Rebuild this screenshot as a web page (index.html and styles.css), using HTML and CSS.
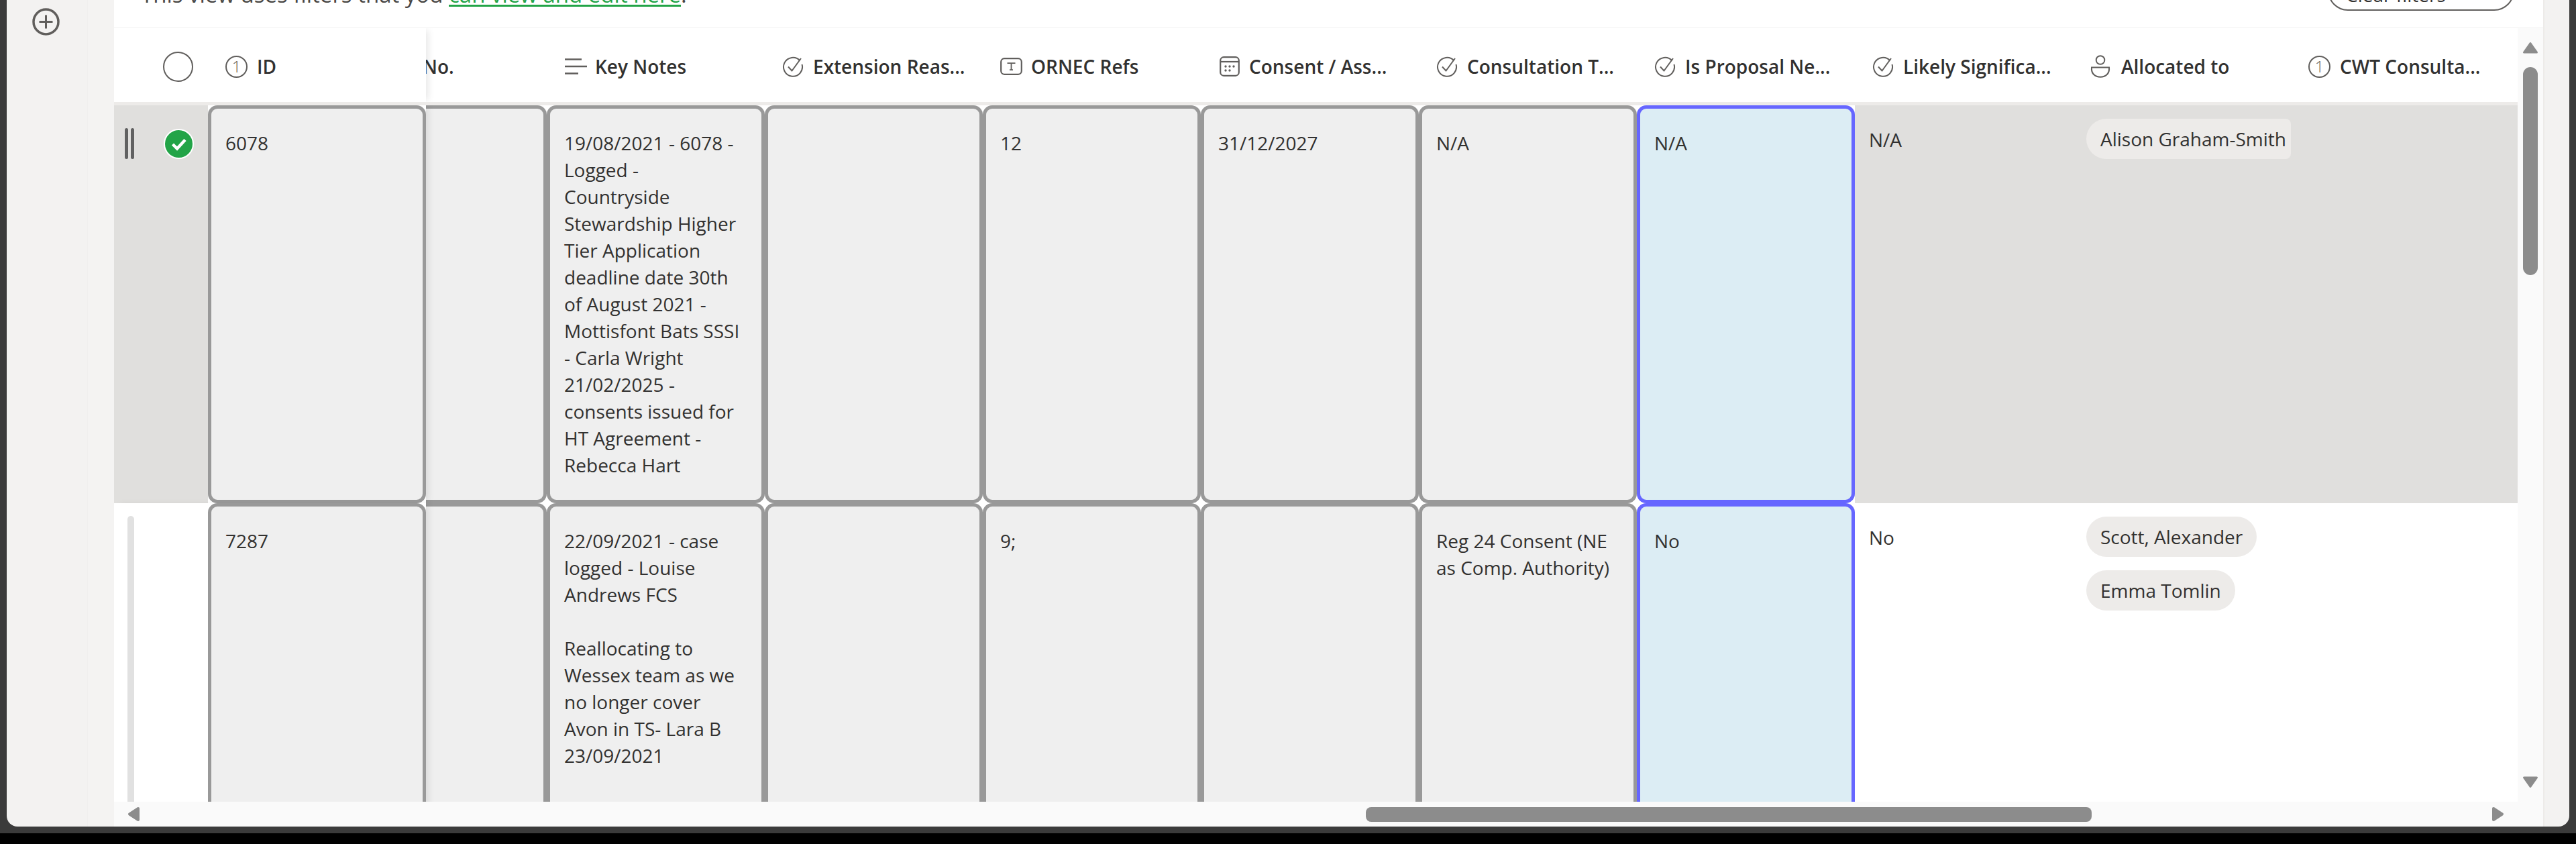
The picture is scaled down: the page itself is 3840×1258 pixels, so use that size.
FILE: index.html
```html
<!DOCTYPE html>
<html lang="en">
<head>
    <meta charset="UTF-8">
    <meta name="viewport" content="width=device-width, initial-scale=1.0">
    <title>Casework list</title>
    <link rel="stylesheet" href="styles.css">
</head>
<body>
    <div class="window">
        <div class="shell">
            <aside class="rail">
                <svg class="add-icon" viewBox="0 0 41 41">
                    <circle cx="20.5" cy="20.5" r="18.5" fill="none" stroke="#605e5c" stroke-width="3.5"/>
                    <path d="M20.5 10.5v20M10.5 20.5h20" fill="none" stroke="#605e5c" stroke-width="3"/>
                </svg>
            </aside>
            <div class="rail-gap"></div>

            <main class="main">
                <div class="filter-bar">
                    <p class="filter-note">This view uses filters that you <a href="#" class="filter-link">can view and edit here</a>.</p>
                    <button class="clear-btn">Clear filters</button>
                </div>

                <div class="grid-area">
                    <div class="grid">
                        <!-- Column headers -->
                        <div class="head-row">
                            <div class="frozen frozen-head">
                                <span class="select-all"></span>
                                <div class="head-id"><span class="num-icon">1</span><span class="head-label">ID</span></div>
                            </div>
                            <div class="head-cell head-short"><span class="head-clip">No.</span></div>
                            <div class="head-cell">
                                <span class="head-icon">
                                    <svg width="34" height="26" viewBox="0 0 34 26"><path d="M1 2.5h25M1 13h33M1 23.500h20" fill="none" stroke="#605e5c" stroke-width="2.500"/></svg>
                                </span>
                                <span class="head-label">Key Notes</span>
                            </div>
                            <div class="head-cell">
                                <span class="head-icon"><svg width="32" height="31" viewBox="0 0 32 31"><use href="#check-icon"/></svg></span>
                                <span class="head-label">Extension Reas...</span>
                            </div>
                            <div class="head-cell">
                                <span class="head-icon">
                                    <svg width="33" height="26" viewBox="0 0 33 26">
                                        <rect x="1.200" y="1.200" width="30.600" height="23.600" rx="5" fill="none" stroke="#605e5c" stroke-width="2.200"/>
                                        <path d="M10.500 8.200h12M16.500 8.200v10M14 18.200h5" fill="none" stroke="#605e5c" stroke-width="1.800"/>
                                    </svg>
                                </span>
                                <span class="head-label">ORNEC Refs</span>
                            </div>
                            <div class="head-cell head-date">
                                <span class="head-icon">
                                    <svg width="30" height="30" viewBox="0 0 30 30">
                                        <rect x="1.200" y="1.200" width="27.600" height="27.600" rx="5" fill="none" stroke="#605e5c" stroke-width="2.200"/>
                                        <path d="M1.500 8h27" stroke="#605e5c" stroke-width="2.200"/>
                                        <g fill="#605e5c"><circle cx="9" cy="15" r="1.700"/><circle cx="15" cy="15" r="1.700"/><circle cx="21" cy="15" r="1.700"/><circle cx="9" cy="21" r="1.700"/><circle cx="15" cy="21" r="1.700"/></g>
                                    </svg>
                                </span>
                                <span class="head-label">Consent / Ass...</span>
                            </div>
                            <div class="head-cell">
                                <span class="head-icon"><svg width="32" height="31" viewBox="0 0 32 31"><use href="#check-icon"/></svg></span>
                                <span class="head-label">Consultation T...</span>
                            </div>
                            <div class="head-cell">
                                <span class="head-icon"><svg width="32" height="31" viewBox="0 0 32 31"><use href="#check-icon"/></svg></span>
                                <span class="head-label">Is Proposal Ne...</span>
                            </div>
                            <div class="head-cell">
                                <span class="head-icon"><svg width="32" height="31" viewBox="0 0 32 31"><use href="#check-icon"/></svg></span>
                                <span class="head-label">Likely Significa...</span>
                            </div>
                            <div class="head-cell">
                                <span class="head-icon">
                                    <svg width="30" height="34" viewBox="0 0 30 34">
                                        <circle cx="15" cy="7.500" r="6.300" fill="none" stroke="#605e5c" stroke-width="2"/>
                                        <path d="M2 18.500h26c1 9-5 14.300-13 14.300S1 27.500 2 18.500z" fill="none" stroke="#605e5c" stroke-width="2"/>
                                    </svg>
                                </span>
                                <span class="head-label">Allocated to</span>
                            </div>
                            <div class="head-cell"><span class="num-icon">1</span><span class="head-label">CWT Consulta...</span></div>
                        </div>

                        <div class="rows">
                            <div class="row row-selected">
                                <div class="frozen">
                                    <div class="lead">
                                        <span class="handle-double"><i></i><i></i></span>
                                        <svg class="row-check" viewBox="0 0 45 45">
                                            <circle cx="22.500" cy="22.500" r="21.500" fill="#22a447" stroke="#fff" stroke-width="2"/>
                                            <path d="M13.500 23l6.500 6.500 12-13" fill="none" stroke="#fff" stroke-width="4.500"/>
                                        </svg>
                                    </div>
                                    <div class="cell cell-edit">6078</div>
                                </div>
                                <div class="cell-group">
                                    <div class="cell cell-edit cell-short"></div>
                                    <div class="cell cell-edit">19/08/2021 - 6078 -<br>Logged -<br>Countryside<br>Stewardship Higher<br>Tier Application<br>deadline date 30th<br>of August 2021 -<br>Mottisfont Bats SSSI<br>- Carla Wright<br>21/02/2025 -<br>consents issued for<br>HT Agreement -<br>Rebecca Hart</div>
                                    <div class="cell cell-edit"></div>
                                    <div class="cell cell-edit">12</div>
                                    <div class="cell cell-edit">31/12/2027</div>
                                    <div class="cell cell-edit">N/A</div>
                                    <div class="cell cell-edit cell-active">N/A</div>
                                </div>
                                <div class="cell cell-plain">N/A</div>
                                <div class="cell cell-people">
                                    <span class="pill pill-clipped">Alison Graham-Smith</span>
                                </div>
                            </div>

                            <div class="row">
                                <div class="frozen">
                                    <div class="lead">
                                        <span class="handle-single"></span>
                                    </div>
                                    <div class="cell cell-edit">7287</div>
                                </div>
                                <div class="cell-group">
                                    <div class="cell cell-edit cell-short"></div>
                                    <div class="cell cell-edit">22/09/2021 - case<br>logged - Louise<br>Andrews FCS<br><br>Reallocating to<br>Wessex team as we<br>no longer cover<br>Avon in TS- Lara B<br>23/09/2021</div>
                                    <div class="cell cell-edit"></div>
                                    <div class="cell cell-edit">9;</div>
                                    <div class="cell cell-edit"></div>
                                    <div class="cell cell-edit">Reg 24 Consent (NE<br>as Comp. Authority)</div>
                                    <div class="cell cell-edit cell-active">No</div>
                                </div>
                                <div class="cell cell-plain">No</div>
                                <div class="cell cell-people">
                                    <span class="pill">Scott, Alexander</span>
                                    <span class="pill">Emma Tomlin</span>
                                </div>
                            </div>
                        </div>

                        <div class="hscroll">
                            <svg class="arrow-x" viewBox="0 0 18 23"><path d="M16 3L3 11.500 16 20z" fill="#8c8c8c" stroke="#8c8c8c" stroke-width="4" stroke-linejoin="round"/></svg>
                            <span class="hscroll-thumb"></span>
                            <svg class="arrow-x arrow-end" viewBox="0 0 18 23"><path d="M2 3l13 8.500L2 20z" fill="#8c8c8c" stroke="#8c8c8c" stroke-width="4" stroke-linejoin="round"/></svg>
                        </div>
                    </div>

                    <div class="vscroll">
                        <svg class="arrow-y" viewBox="0 0 24 18"><path d="M12 2.500L2.500 16h19z" fill="#8c8c8c" stroke="#8c8c8c" stroke-width="3" stroke-linejoin="round"/></svg>
                        <span class="vscroll-thumb"></span>
                        <svg class="arrow-y arrow-end-y" viewBox="0 0 24 18"><path d="M2.500 2h19L12 15.500z" fill="#8c8c8c" stroke="#8c8c8c" stroke-width="3" stroke-linejoin="round"/></svg>
                    </div>
                </div>
            </main>

            <div class="side-gap"></div>
        </div>
    </div>

    <svg class="icon-defs" width="0" height="0">
        <symbol id="check-icon" viewBox="0 0 32 31">
            <path d="M26.500 6.500A14 14 0 1 0 29.500 12" fill="none" stroke="#605e5c" stroke-width="2"/>
            <path d="M9 15.500l5.500 6L28 3" fill="none" stroke="#605e5c" stroke-width="2"/>
        </symbol>
    </svg>
</body>
</html>
```

FILE: styles.css
```css
* {
  box-sizing: border-box;
}

body {
  margin: 0;
  height: 1258px;
  overflow: hidden;
  background: #000;
  font-family: "Open Sans", "Noto Sans", sans-serif;
  font-size: 28px;
  line-height: 40px;
  color: #323130;
}

.window {
  height: 1242px;
  padding: 0 10px 10px;
  background: #3b3b3b;
}

.shell {
  display: flex;
  height: 1232px;
  background: #f3f2f1;
  border-radius: 0 0 16px 16px;
  overflow: hidden;
}

.rail {
  flex: none;
  width: 120px;
  padding: 12px 0 0 38px;
}

.add-icon {
  display: block;
  width: 41px;
  height: 41px;
}

.rail-gap {
  flex: none;
  width: 40px;
  background: #f4f3f2;
  border-left: 1px solid #f0efee;
}

.main {
  flex: none;
  width: 3621px;
  display: flex;
  flex-direction: column;
  background: #fff;
  overflow: hidden;
}

.side-gap {
  flex: 1;
  border-left: 2px solid #edebe9;
}

/* Filter note, scrolled mostly out of view */
.filter-bar {
  flex: none;
  display: flex;
  height: 42px;
  padding: 0 43px 0 40px;
  border-bottom: 2px solid #f8f8f8;
}

.filter-note {
  margin: -28px 0 0;
  height: 40px;
  font-size: 33px;
  color: #484644;
}

.filter-link {
  color: #22a447;
  text-decoration: underline;
  text-decoration-thickness: 3px;
  text-underline-offset: 3px;
}

.clear-btn {
  width: 278px;
  height: 60px;
  margin: -44px 0 0 auto;
  padding: 12px 0 0 25px;
  background: #fff;
  border: 2.5px solid #605e5c;
  border-radius: 30px;
  font: inherit;
  text-align: left;
  color: #323130;
}

.grid-area {
  flex: 1;
  display: flex;
  min-height: 0;
}

.grid {
  flex: none;
  width: 3583px;
  display: flex;
  flex-direction: column;
  overflow: hidden;
}

/* Header */
.head-row {
  flex: none;
  display: flex;
  height: 115px;
  border-bottom: 5px solid #edebe9;
  overflow: hidden;
}

.frozen {
  flex: none;
  display: flex;
  width: 465px;
  background: #fff;
  position: relative;
  z-index: 2;
  box-shadow: 6px 0 10px -3px rgba(0, 0, 0, 0.1);
}

.frozen-head {
  align-items: center;
  padding: 4px 0 0 73px;
}

.select-all {
  flex: none;
  width: 45px;
  height: 45px;
  border: 2.5px solid #605e5c;
  border-radius: 50%;
}

.head-id {
  display: flex;
  align-items: center;
  gap: 14px;
  margin-left: 48px;
}

.head-cell {
  flex: none;
  display: flex;
  align-items: center;
  gap: 12px;
  width: 325px;
  padding: 4px 0 0 26px;
}

.head-short {
  width: 180px;
  padding-left: 0;
  overflow: hidden;
}

.head-clip {
  margin-left: -5px;
  font-weight: 600;
}

.head-date .head-icon {
  margin: 0 -2px 0 2px;
}

.head-icon {
  flex: none;
  display: flex;
  align-items: center;
  justify-content: flex-start;
  width: 34px;
  height: 34px;
}

.head-label {
  font-weight: 600;
  white-space: nowrap;
}

.num-icon {
  flex: none;
  width: 33px;
  height: 33px;
  border: 2px solid #605e5c;
  border-radius: 50%;
  font-size: 24px;
  font-weight: 300;
  line-height: 28px;
  text-align: center;
  color: #605e5c;
}

.head-cell .num-icon {
  margin-right: 2px;
}

/* Rows */
.rows {
  flex: 1;
  min-height: 0;
  overflow: hidden;
}

.row {
  display: flex;
  height: 593px;
}

.row + .row {
  height: 760px;
}

.row-selected {
  background: #e0dfdd;
}

.lead {
  flex: none;
  display: flex;
  width: 140px;
  background: #fff;
}

.row-selected .lead {
  background: #e0dfdd;
  padding-top: 34px;
}

.handle-double {
  display: flex;
  gap: 4px;
  height: 46px;
  margin-left: 16px;
}

.handle-double i {
  width: 5px;
  border-radius: 3px;
  background: #616161;
}

.row-check {
  width: 45px;
  height: 45px;
  margin: 1px 0 0 44px;
}

.handle-single {
  width: 10px;
  height: 760px;
  margin: 19px 0 0 20px;
  border-radius: 5px;
  background: #e1e1e1;
}

.cell-group {
  flex: none;
  display: flex;
  background: #fff;
}

.cell {
  flex: none;
  width: 325px;
  padding: 31px 21px;
  white-space: nowrap;
}

.cell-edit {
  background: #efefef;
  border: 5px solid #999;
  border-radius: 14px;
}

.cell-short {
  width: 180px;
  border-left: 0;
  border-radius: 0 14px 14px 0;
}

.cell-active {
  background: #dcedf4;
  border-color: #6666ff;
}

.cell-plain {
  padding: 31px 21px;
}

.cell-people {
  display: flex;
  flex-direction: column;
  align-items: flex-start;
  gap: 20px;
  padding: 20px 0 0 20px;
}

.pill {
  height: 60px;
  padding: 0 21px;
  border-radius: 30px;
  background: #edebe9;
  line-height: 60px;
}

.pill-clipped {
  width: 305px;
  padding-right: 0;
  border-radius: 30px 8px 8px 30px;
  overflow: hidden;
}

/* Scrollbars */
.hscroll {
  flex: none;
  display: flex;
  align-items: center;
  height: 37px;
  padding: 0 20px;
  background: #fafafa;
}

.arrow-x {
  flex: none;
  width: 18px;
  height: 23px;
}

.arrow-end {
  margin-left: auto;
}

.hscroll-thumb {
  width: 1082px;
  height: 22px;
  margin-left: 1828px;
  border-radius: 8px;
  background: #8c8c8c;
}

.vscroll {
  flex: none;
  display: flex;
  flex-direction: column;
  align-items: center;
  width: 38px;
  padding: 20px 0 57px;
  background: #fafafa;
}

.arrow-y {
  flex: none;
  width: 24px;
  height: 18px;
}

.arrow-end-y {
  margin-top: auto;
}

.vscroll-thumb {
  width: 22px;
  height: 310px;
  margin-top: 20px;
  border-radius: 11px;
  background: #8c8c8c;
}

.icon-defs {
  position: absolute;
}
```
